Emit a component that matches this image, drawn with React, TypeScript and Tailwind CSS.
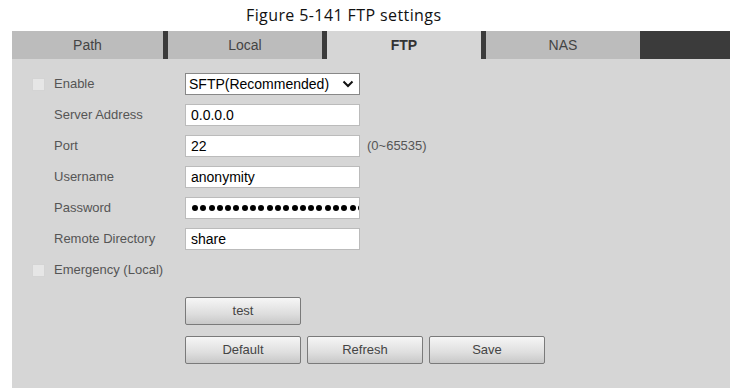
import React from "react";

const tabs = [
  { name: "Path", active: false },
  { name: "Local", active: false },
  { name: "FTP", active: true },
  { name: "NAS", active: false },
];

function Row({ label, children, check = false }: { label: string; children?: React.ReactNode; check?: boolean }) {
  return (
    <div className="flex h-[22px] items-center">
      <div className="w-[22px]">
        {check && <span className="block h-[13px] w-[13px] border border-[#d4d4d4] bg-[#e6e6e6]" />}
      </div>
      <div className="w-[131px] text-[13px] text-[#555]">{label}</div>
      {children}
    </div>
  );
}

function Field({ value }: { value: string }) {
  return (
    <div className="flex h-[22px] w-[175px] items-center border border-[#bbb] bg-white px-[5px] text-[14px] text-black">
      {value}
    </div>
  );
}

function Btn({ label }: { label: string }) {
  return (
    <button className="h-[28px] w-[116px] rounded-[2px] border border-[#7a7a7a] bg-[linear-gradient(#f6f6f6,#dedede_60%,#c8c8c8)] text-[13px] text-[#444]">
      {label}
    </button>
  );
}

export default function App() {
  return (
    <div className="h-[388px] w-[744px] bg-white font-['Liberation_Sans',Arial,sans-serif]">
      <div className="flex h-[31px] items-center pb-[2px] pl-[246px] font-['Open_Sans',sans-serif] text-[16px] tracking-[0.4px] text-[#111]">
        Figure 5-141 FTP settings
      </div>
      <div className="ml-[12px] w-[718px] bg-[#d6d6d6] pb-[29px]">
        {/* Tabs */}
        <div className="flex h-[28px] bg-[#3b3b3b] text-[14px]">
          {tabs.map((t, i) => (
            <div
              key={t.name}
              className={`flex items-center justify-center ${i > 0 ? "ml-[5px] w-[154px]" : "w-[151px]"} ${
                t.active ? "bg-[#d6d6d6] font-bold text-[#333]" : "bg-[#bcbcbc] text-[#444]"
              }`}
            >
              {t.name}
            </div>
          ))}
        </div>

        {/* Form */}
        <div className="flex flex-col gap-[9px] pl-[20px] pt-[14px]">
          <Row label="Enable" check>
            <div className="flex h-[22px] w-[175px] items-center justify-between border border-[#888] bg-white pl-[3px] pr-[5px] text-[14px] text-black">
              <span>SFTP(Recommended)</span>
              <svg width="12" height="8" viewBox="0 0 12 8">
                <path d="M1.5 1.5 L6 6 L10.5 1.5" fill="none" stroke="#111" strokeWidth="2" />
              </svg>
            </div>
          </Row>
          <Row label="Server Address">
            <Field value="0.0.0.0" />
          </Row>
          <Row label="Port">
            <Field value="22" />
            <span className="ml-[7px] text-[13px] text-[#555]">(0~65535)</span>
          </Row>
          <Row label="Username">
            <Field value="anonymity" />
          </Row>
          <Row label="Password">
            <div className="flex h-[22px] w-[175px] items-center gap-[2.3px] overflow-hidden border border-[#bbb] bg-white pl-[6px]">
              {Array.from({ length: 22 }).map((_, i) => (
                <span key={i} className="block h-[6px] w-[6px] shrink-0 rounded-full bg-black" />
              ))}
            </div>
          </Row>
          <Row label="Remote Directory">
            <Field value="share" />
          </Row>
          <Row label="Emergency (Local)" check />
        </div>

        <div className="ml-[173px] mt-[16px] flex flex-col gap-[11px]">
          <Btn label="test" />
          <div className="flex gap-[6px]">
            <Btn label="Default" />
            <Btn label="Refresh" />
            <Btn label="Save" />
          </div>
        </div>
      </div>
    </div>
  );
}
